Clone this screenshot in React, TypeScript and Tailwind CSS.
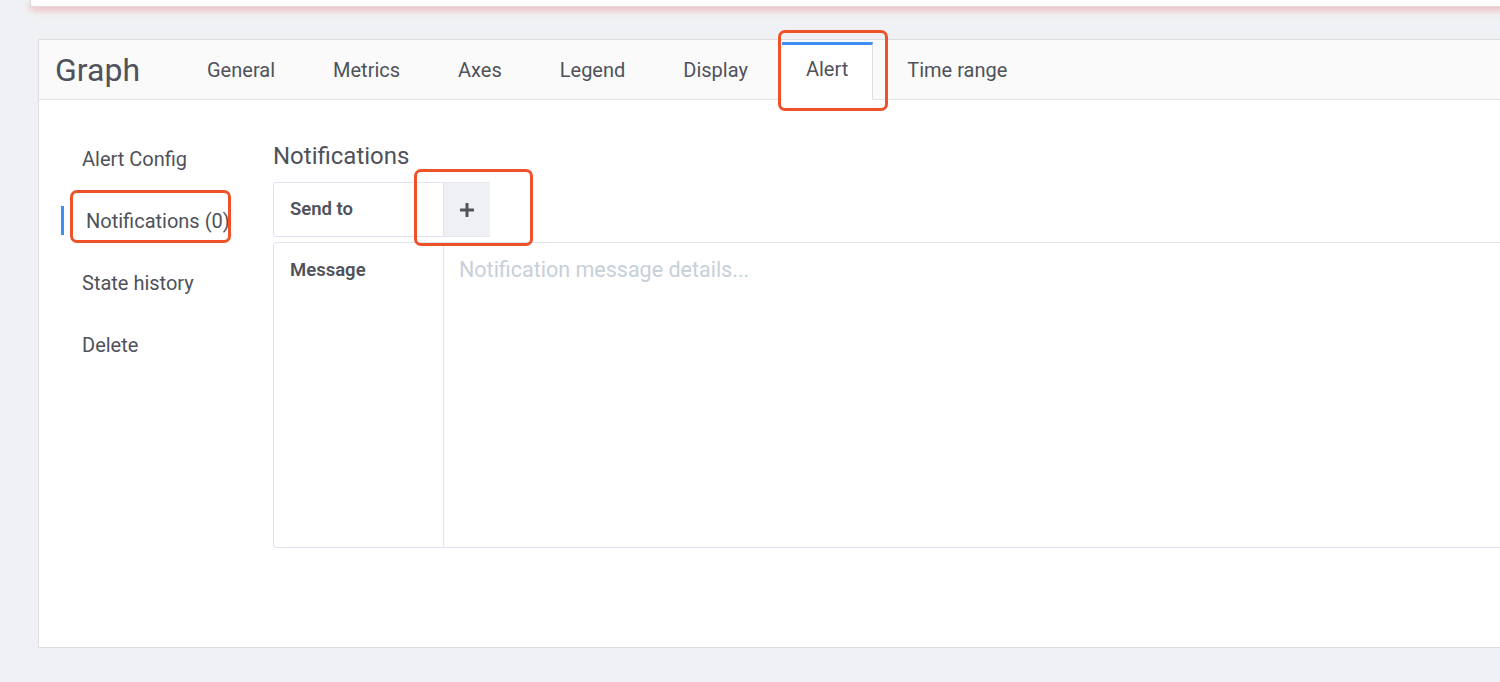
const TABS = ["General", "Metrics", "Axes", "Legend", "Display", "Alert", "Time range"] as const;
const NAV = ["Alert Config", "Notifications (0)", "State history", "Delete"] as const;

function PlusIcon() {
  return (
    <svg width="14" height="14" viewBox="0 0 14 14" className="fill-[#52545c]">
      <rect x="5.5" y="0" width="3" height="14" rx="0.5" />
      <rect x="0" y="5.5" width="14" height="3" rx="0.5" />
    </svg>
  );
}

export default function App() {
  return (
    <div className="relative h-[682px] w-[1500px] overflow-hidden bg-[#f0f1f4] font-['Roboto',sans-serif] text-[#4f525a]">
      {/* top panel edge */}
      <div className="ml-[30px] h-[7px] w-[1490px] rounded-bl-[3px] border-b border-l border-[#dcdcdc] bg-white shadow-[0_3px_7px_rgba(232,96,96,0.4)]" />

      {/* editor panel */}
      <div className="ml-[38px] mt-[32px] h-[609px] w-[1480px] border border-[#dedede] bg-white">
        {/* header / tabs */}
        <div className="flex h-[60px] items-center border-b border-[#e3e3e3] bg-[#fafafa]">
          <div className="w-[144px] pl-4 text-[32px] leading-none">Graph</div>
          <div className="flex h-full gap-2.5">
            {TABS.map((t) =>
              t === "Alert" ? (
                <div
                  key={t}
                  className="mt-[2px] -mb-px flex items-center border-r border-t-[3px] border-r-[#dedede] border-t-[#3d8ef5] bg-white px-6 pb-[7px] text-[20px]"
                >
                  {t}
                </div>
              ) : (
                <div key={t} className="flex items-center px-6 text-[20px]">
                  {t}
                </div>
              )
            )}
          </div>
        </div>

        {/* body */}
        <div className="flex">
          {/* side nav */}
          <div className="w-[234px] shrink-0 pl-[22px] pt-[44px]">
            <div className="flex flex-col gap-[33px]">
              {NAV.map((n, i) =>
                i === 1 ? (
                  <div
                    key={n}
                    className="flex h-[29px] items-center whitespace-nowrap border-l-[3px] border-[#3d8ef5] pl-[22px] text-[20px]"
                  >
                    {n}
                  </div>
                ) : (
                  <div
                    key={n}
                    className="flex h-[29px] items-center whitespace-nowrap border-l-[3px] border-transparent pl-[18px] text-[20px]"
                  >
                    {n}
                  </div>
                )
              )}
            </div>
          </div>

          {/* notifications */}
          <div className="flex-1 pt-[41px]">
            <h3 className="text-[24px] leading-[30px]">Notifications</h3>
            <div className="mt-[11px] flex h-[55px]">
              <div className="flex w-[171px] items-center rounded-l-[3px] border border-[#dde4ed] pl-4 text-[18.5px] font-semibold">
                Send to
              </div>
              <div className="flex w-[46px] items-center justify-center border-y border-[#e4e8ee] bg-[#eef0f4]">
                <PlusIcon />
              </div>
            </div>
            <div className="mt-[5px] flex h-[306px]">
              <div className="w-[171px] rounded-l-[3px] border border-[#dde4ed] pl-4 pt-[14px] text-[18.5px] font-semibold">
                Message
              </div>
              <div className="flex-1 border-y border-r border-[#dde4ed] pl-[15px] pt-[11px] text-[21.5px] text-[#c7d0d9]">
                Notification message details...
              </div>
            </div>
          </div>
        </div>
      </div>

      {/* annotation boxes */}
      <div className="absolute left-[778px] top-[30px] h-[81px] w-[110px] rounded-[7px] border-[3px] border-[#ef5128]" />
      <div className="absolute left-[70px] top-[190px] h-[53px] w-[161px] rounded-[7px] border-[3px] border-[#ef5128]" />
      <div className="absolute left-[414px] top-[169px] h-[77px] w-[119px] rounded-[7px] border-[3px] border-[#ef5128]" />
    </div>
  );
}
